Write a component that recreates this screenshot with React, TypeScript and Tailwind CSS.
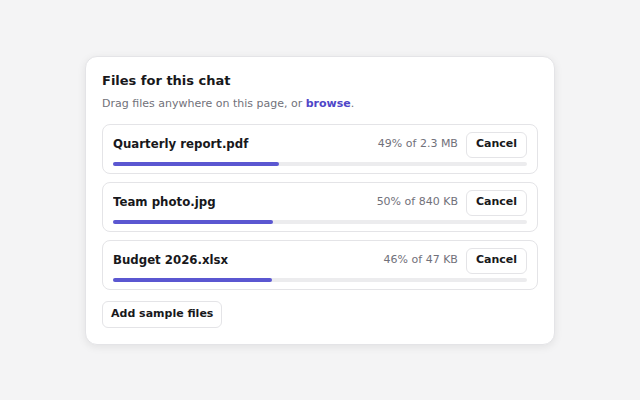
const files = [
  { name: 'Quarterly report.pdf', meta: '49% of 2.3 MB', bar: 'w-[40%]' },
  { name: 'Team photo.jpg', meta: '50% of 840 KB', bar: 'w-[38.7%]' },
  { name: 'Budget 2026.xlsx', meta: '46% of 47 KB', bar: 'w-[38.4%]' },
];

export default function App() {
  return (
    <div
      className="flex h-[400px] w-[640px] items-center justify-center bg-[#f4f4f5] text-[#18181b]"
      style={{ fontFamily: '"DejaVu Sans", sans-serif' }}
    >
      <div className="w-[470px] rounded-xl border border-[#e4e4e7] bg-white px-4 pb-4 pt-[14px] shadow-[0_2px_8px_rgba(0,0,0,0.08)]">
        {/* Header */}
        <h2 className="text-[13px] font-bold leading-[20px]">Files for this chat</h2>
        <p className="mt-[5px] text-[11px] leading-[16px] text-[#71717a]">
          Drag files anywhere on this page, or{' '}
          <span className="font-bold text-[#4f46c8]">browse</span>.
        </p>

        {/* Upload list */}
        <div className="mt-[12px] flex flex-col gap-[8px]">
          {files.map((f) => (
            <div
              key={f.name}
              className="rounded-lg border border-[#e4e4e7] px-[10px] pb-[7px] pt-[7px]"
            >
              <div className="flex items-center">
                <span className="flex-1 truncate text-[11.75px] font-bold">{f.name}</span>
                <span className="text-[11px] text-[#71717a]">{f.meta}</span>
                <button className="ml-[8px] h-[26px] rounded-md border border-[#e4e4e7] px-[9px] text-[11px] font-bold">
                  Cancel
                </button>
              </div>
              <div className="mt-[4px] h-[4px] rounded-full bg-[#ececee]">
                <div className={`h-full rounded-full bg-[#5b57d1] ${f.bar}`} />
              </div>
            </div>
          ))}
        </div>

        <button className="mt-[11px] h-[27px] rounded-md border border-[#e4e4e7] px-[8px] text-[11px] font-bold">
          Add sample files
        </button>
      </div>
    </div>
  );
}
